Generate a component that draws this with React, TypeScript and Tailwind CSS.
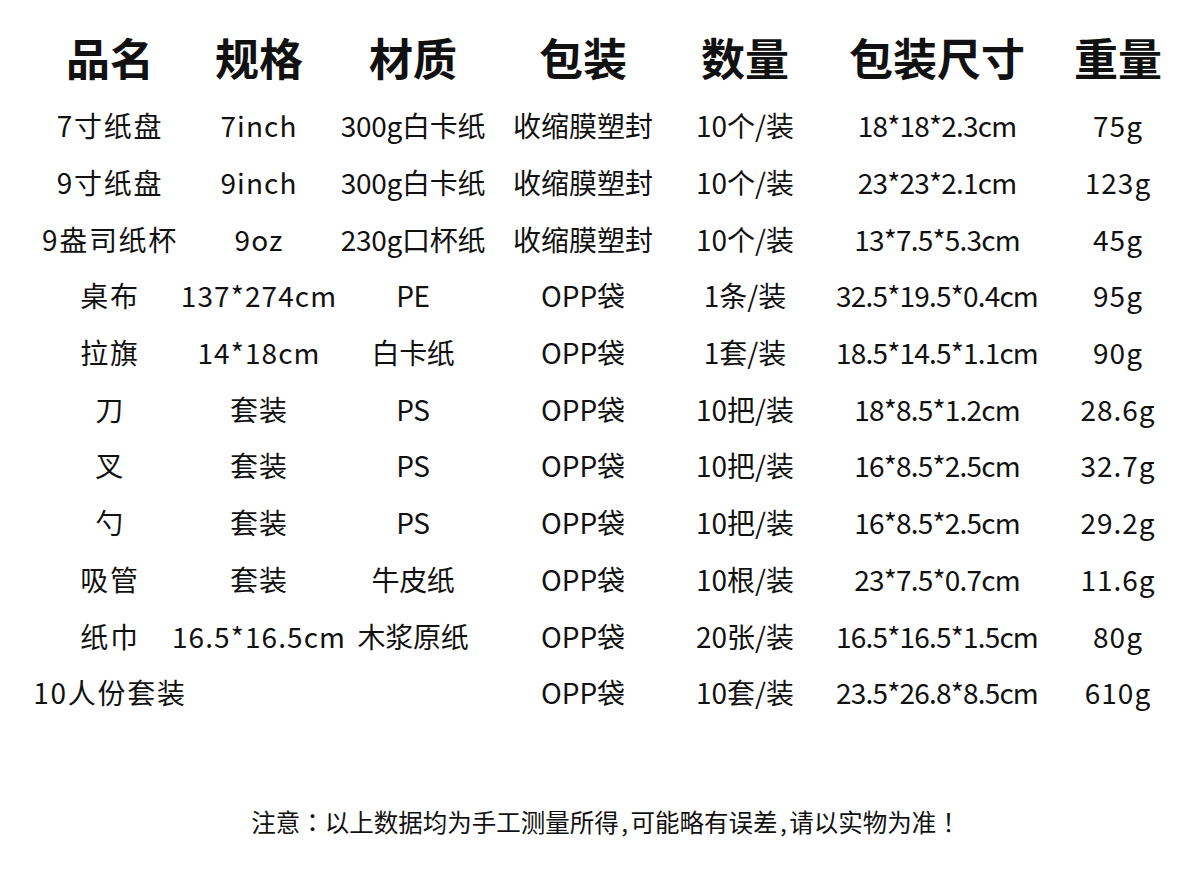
import React from "react";

const headers = ["品名", "规格", "材质", "包装", "数量", "包装尺寸", "重量"];

const rows: string[][] = [
  ["7寸纸盘", "7inch", "300g白卡纸", "收缩膜塑封", "10个/装", "18*18*2.3cm", "75g"],
  ["9寸纸盘", "9inch", "300g白卡纸", "收缩膜塑封", "10个/装", "23*23*2.1cm", "123g"],
  ["9盎司纸杯", "9oz", "230g口杯纸", "收缩膜塑封", "10个/装", "13*7.5*5.3cm", "45g"],
  ["桌布", "137*274cm", "PE", "OPP袋", "1条/装", "32.5*19.5*0.4cm", "95g"],
  ["拉旗", "14*18cm", "白卡纸", "OPP袋", "1套/装", "18.5*14.5*1.1cm", "90g"],
  ["刀", "套装", "PS", "OPP袋", "10把/装", "18*8.5*1.2cm", "28.6g"],
  ["叉", "套装", "PS", "OPP袋", "10把/装", "16*8.5*2.5cm", "32.7g"],
  ["勺", "套装", "PS", "OPP袋", "10把/装", "16*8.5*2.5cm", "29.2g"],
  ["吸管", "套装", "牛皮纸", "OPP袋", "10根/装", "23*7.5*0.7cm", "11.6g"],
  ["纸巾", "16.5*16.5cm", "木浆原纸", "OPP袋", "20张/装", "16.5*16.5*1.5cm", "80g"],
  ["10人份套装", "", "", "OPP袋", "10套/装", "23.5*26.8*8.5cm", "610g"],
];

const colTracking = [
  "tracking-[1.7px]",
  "tracking-[1.1px]",
  "tracking-[-0.3px]",
  "tracking-normal",
  "tracking-normal",
  "tracking-[-0.8px]",
  "tracking-[1px]",
];

const grid = "grid grid-cols-[180px_118px_190px_150px_174px_210px_152px]";

export default function App() {
  return (
    <div
      className="w-[1200px] h-[869px] bg-white text-[#111111] overflow-hidden pl-[20px] pt-[20px]"
      style={{ fontFamily: '"Noto Sans CJK SC", "Noto Sans", sans-serif' }}
    >
      <div className={`${grid} h-[74px] items-center`}>
        {headers.map((h, i) => (
          <div key={i} className="flex justify-center whitespace-nowrap text-[44px] font-bold leading-none">
            {h}
          </div>
        ))}
      </div>
      <div className="mt-[3px]">
        {rows.map((r, ri) => (
          <div key={ri} className={`${grid} h-[56.7px] items-center`}>
            {r.map((c, ci) => (
              <div
                key={ci}
                className={`flex justify-center whitespace-nowrap text-[28px] leading-none ${colTracking[ci]}`}
              >
                {c}
              </div>
            ))}
          </div>
        ))}
      </div>
      <div className="mt-[82px] h-[40px] flex items-center justify-center pr-[8px] text-[24.5px] leading-none whitespace-nowrap [text-spacing-trim:space-all]">
        <span>注意</span>
        <span className="inline-block w-[1em] text-center font-['Noto_Sans_CJK_TC']">：</span>
        <span>以上数据均为手工测量所得</span>
        <span className="px-[2.5px]">,</span>
        <span>可能略有误差</span>
        <span className="px-[2.5px]">,</span>
        <span>请以实物为准</span>
        <span className="inline-block w-[1em] text-center font-['Noto_Sans_CJK_TC']">！</span>
      </div>
    </div>
  );
}
